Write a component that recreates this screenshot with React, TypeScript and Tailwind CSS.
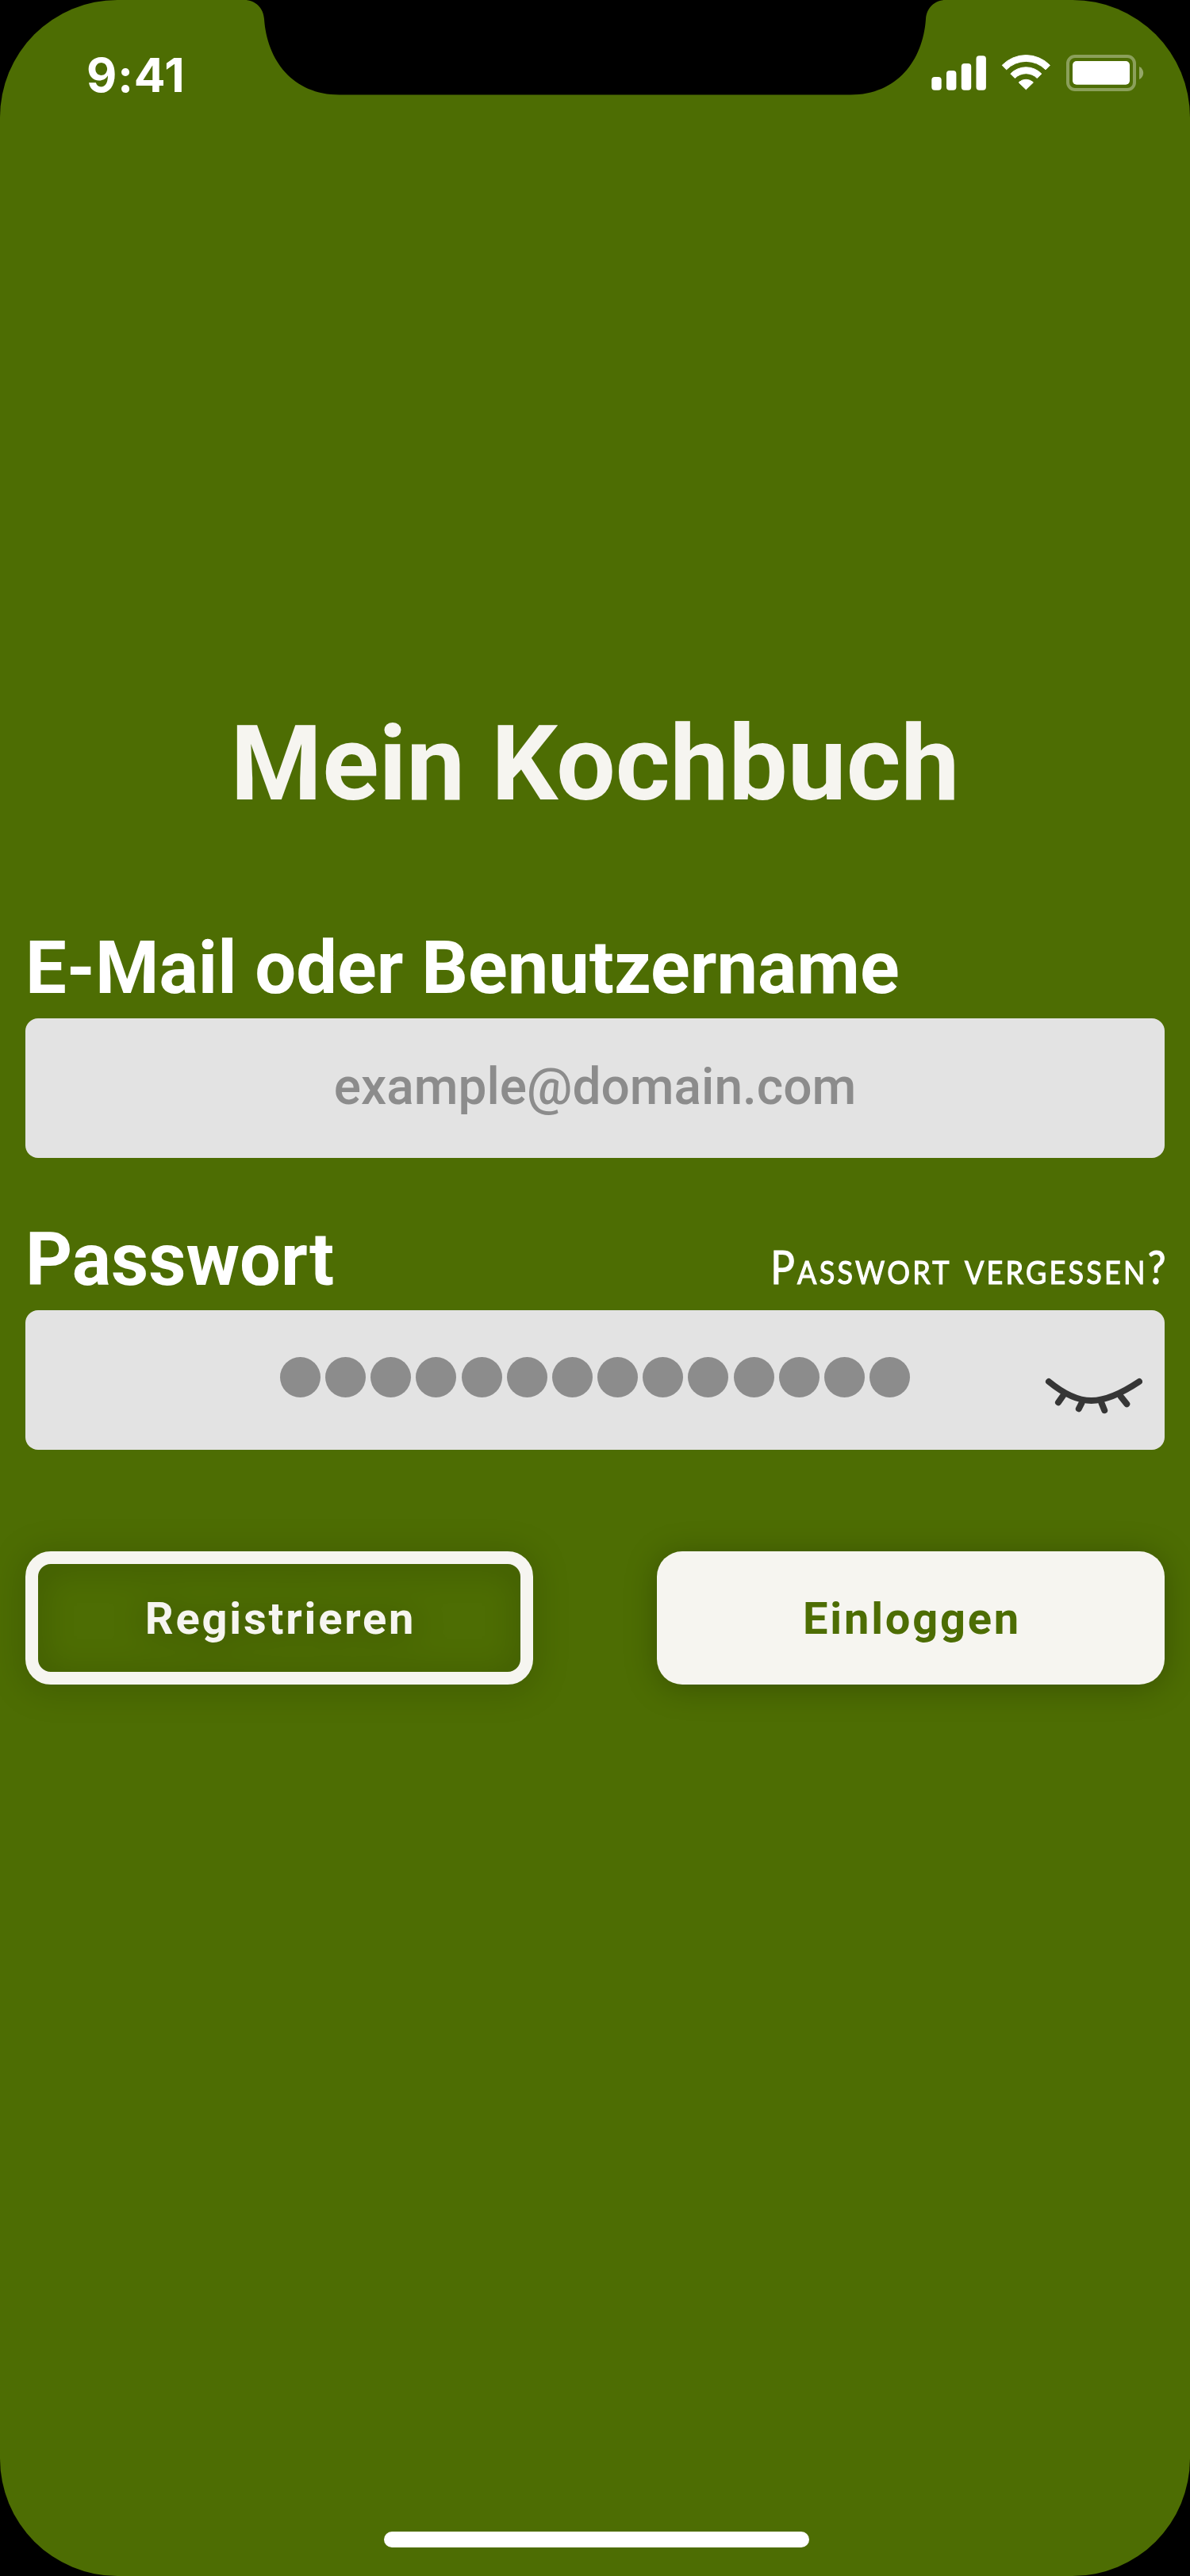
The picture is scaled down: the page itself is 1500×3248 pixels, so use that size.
import type { ReactNode } from "react";

function Notch() {
  return (
    <svg className="absolute top-0 left-[300px]" width="900" height="120" viewBox="300 0 900 120" fill="#000">
      <path d="M308 0C322 0 332 10 333 24C336.5 76 369 119.5 428 119.5H1072C1131 119.5 1163.5 76 1167 24C1168 10 1178 0 1192 0Z" />
    </svg>
  );
}

function StatusIcons() {
  return (
    <svg width="270" height="50" viewBox="1172 67 270 50" fill="#fff">
      <rect x="1174.3" y="97" width="12.4" height="16.8" rx="4" />
      <rect x="1193" y="89" width="12.4" height="24.8" rx="4" />
      <rect x="1211.8" y="80" width="12.4" height="33.8" rx="4" />
      <rect x="1230.5" y="70.3" width="12.4" height="43.5" rx="4" />
      <g stroke="#fff" strokeWidth="1" strokeLinejoin="round">
        <path d="M1263.2 82.3A42 42 0 0 1 1323.4 82.3L1318 87.8A34.5 34.5 0 0 0 1268.6 87.8Z" />
        <path d="M1273.8 93A27.3 27.3 0 0 1 1312.8 93L1307.3 98.5A19.8 19.8 0 0 0 1279.3 98.5Z" />
        <path d="M1284.2 104A13 13 0 0 1 1302.4 104L1293.3 112.8Z" />
      </g>
      <rect x="1346" y="71" width="84" height="42" rx="9" fill="none" stroke="#fff" strokeOpacity="0.35" strokeWidth="4" />
      <path d="M1436 84C1439.2 85.3 1441.2 88.5 1441.2 92S1439.2 98.7 1436 100Z" fillOpacity="0.4" />
      <rect x="1352" y="77" width="72" height="29.8" rx="5" />
    </svg>
  );
}

function ClosedEye() {
  return (
    <svg width="124" height="52" viewBox="1316 1734 124 52" fill="none" stroke="#363636" strokeWidth="8" strokeLinecap="round">
      <path d="M1322 1742C1361 1774 1388 1774 1436 1742" />
      <path d="M1340.5 1759L1334 1768.3" />
      <path d="M1363.5 1769L1359.8 1776.3" />
      <path d="M1388.5 1769L1392.2 1778.2" />
      <path d="M1412.5 1760.5L1420.3 1770.3" />
    </svg>
  );
}

function Field({ children }: { children: ReactNode }) {
  return (
    <div className="relative flex h-44 items-center justify-center rounded-2xl bg-[#e3e3e3]">{children}</div>
  );
}

export default function App() {
  return (
    <div className="h-[3248px] w-[1500px] bg-black font-['Roboto',sans-serif]">
      <div className="relative flex h-full flex-col overflow-hidden rounded-[148px] bg-[#4d6d03]">
        <Notch />
        <header className="flex h-[186px] items-start justify-between pr-[58px] pl-[109px]">
          <span className="mt-[59px] font-['Inter',sans-serif] text-[59px] leading-[72px] font-bold tracking-[0.9px] text-white">9:41</span>
          <div className="mt-[67px]">
            <StatusIcons />
          </div>
        </header>

        <main className="flex flex-col px-8 pt-[699px]">
          <h1 className="text-center text-[132px] leading-[156px] font-bold text-[#f6f5f0]">Mein Kochbuch</h1>

          <label className="mt-[126px] mb-[9px] text-[92px] leading-[108px] font-bold text-white">E-Mail oder Benutzername</label>
          <Field>
            <span className="pb-0.5 text-[64px] leading-[76px] font-medium text-[#8c8c8c]">example@domain.com</span>
          </Field>

          <div className="mt-[75px] mb-[9px] flex items-end justify-between">
            <label className="text-[92px] leading-[108px] font-bold text-white">Passwort</label>
            <a className="-mr-[5px] mb-1 origin-right scale-x-[0.877] font-['Lato',sans-serif] text-[58px] leading-[84px] tracking-[3.7px] text-white [font-variant-caps:small-caps] [-webkit-text-stroke:1.2px_white]">
              Passwort vergessen?
            </a>
          </div>
          <Field>
            <div className="flex gap-[6.16px] pb-[7px]">
              {Array.from({ length: 14 }, (_, i) => (
                <span key={i} className="size-[51px] rounded-full bg-[#8c8c8c]" />
              ))}
            </div>
            <div className="absolute top-[82px] right-7">
              <ClosedEye />
            </div>
          </Field>

          <div className="mt-32 flex justify-between">
            <button className="h-[168px] w-[640px] rounded-[32px] border-16 border-[#f6f5f0] pt-0.5 pl-[3px] text-[56px] leading-[66px] font-bold tracking-[2.8px] text-[#f6f5f0] drop-shadow-[0_4px_20px_rgba(0,0,0,0.25)]">
              Registrieren
            </button>
            <button className="h-[168px] w-[640px] rounded-[32px] bg-[#f6f5f0] pt-0.5 pl-[3px] text-[56px] leading-[66px] font-bold tracking-[2.8px] text-[#4d6d03] shadow-[0_4px_40px_rgba(0,0,0,0.25)]">
              Einloggen
            </button>
          </div>
        </main>

        <div className="mt-auto mb-9 ml-[484px] h-5 w-[536px] rounded-full bg-white" />
      </div>
    </div>
  );
}
